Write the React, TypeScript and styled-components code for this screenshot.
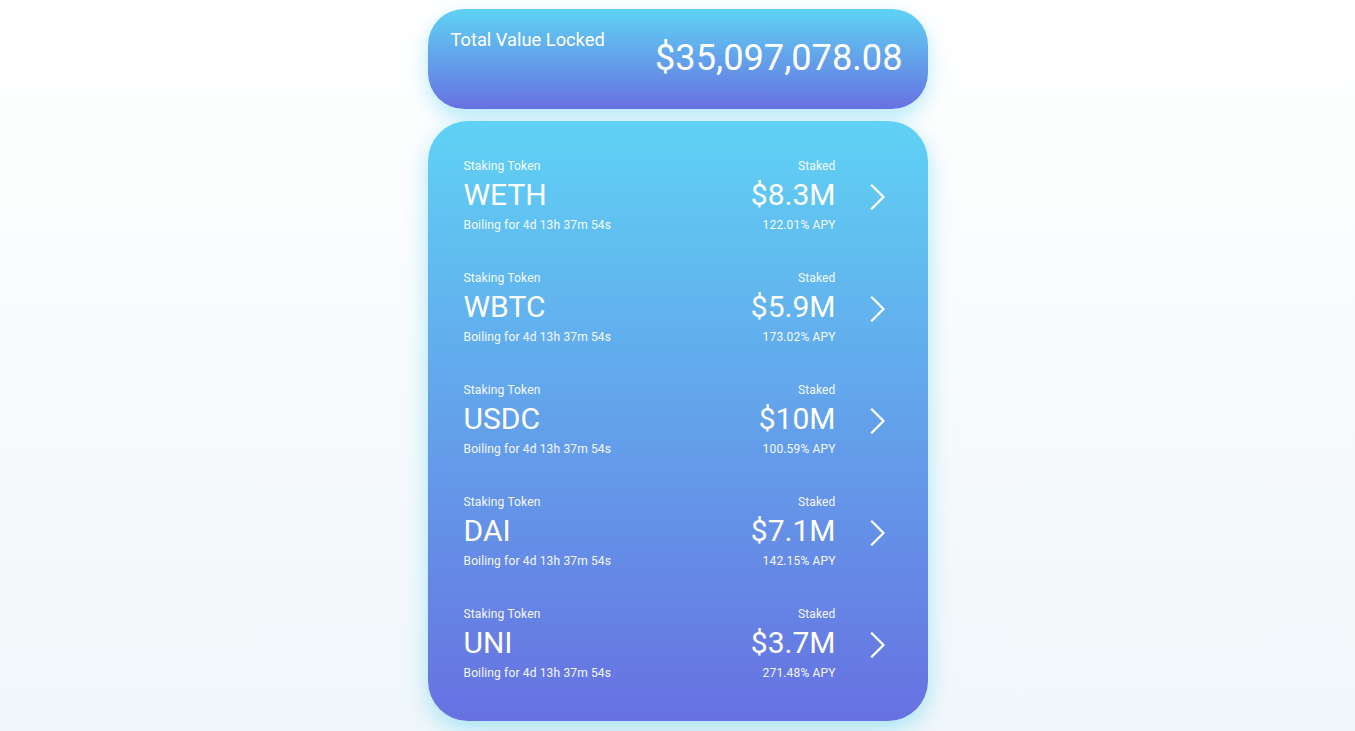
import styled, { createGlobalStyle } from "styled-components";

type Pool = {
  token: string
  staked: string
  apy: string
}

const pools: Pool[] = [
  { token: "WETH", staked: "$8.3M", apy: "122.01% APY" },
  { token: "WBTC", staked: "$5.9M", apy: "173.02% APY" },
  { token: "USDC", staked: "$10M", apy: "100.59% APY" },
  { token: "DAI", staked: "$7.1M", apy: "142.15% APY" },
  { token: "UNI", staked: "$3.7M", apy: "271.48% APY" },
];

const GlobalStyle = createGlobalStyle`
  html, body {
    margin: 0;
    padding: 0;
  }
  body {
    font-family: Roboto, "Liberation Sans", sans-serif;
    background: linear-gradient(180deg, #ffffff 0%, #f0f7fa 100%);
    min-height: 731px;
    color: #fff;
  }
`

function Chevron() {
  return (
    <svg width="16" height="26" viewBox="0 0 16 26" fill="none">
      <path d="M2 1.5 L13.5 13 L2 24.5" stroke="#fff" strokeWidth="2.2" strokeLinecap="square" />
    </svg>
  )
}

export default function App() {
  return (
    <>
      <GlobalStyle />
      <Page>
        <TvlCard>
          <TvlLabel>Total Value Locked</TvlLabel>
          <TvlAmount>$35,097,078.08</TvlAmount>
        </TvlCard>

        <PoolCard>
          {pools.map((pool) => (
            <PoolRow key={pool.token}>
              <PoolInfo>
                <SmallText>Staking Token</SmallText>
                <BigText>{pool.token}</BigText>
                <SmallText>Boiling for 4d 13h 37m 54s</SmallText>
              </PoolInfo>
              <PoolInfo $right>
                <SmallText>Staked</SmallText>
                <BigText>{pool.staked}</BigText>
                <SmallText>{pool.apy}</SmallText>
              </PoolInfo>
              <Arrow>
                <Chevron />
              </Arrow>
            </PoolRow>
          ))}
        </PoolCard>
      </Page>
    </>
  )
}

const Page = styled.div`
  display: flex;
  flex-direction: column;
  align-items: center;
  padding-top: 9px;
  gap: 12px;
`

const TvlCard = styled.div`
  width: 500px;
  height: 100px;
  box-sizing: border-box;
  border-radius: 36px;
  background: linear-gradient(180deg, #5fd2f4 0%, #6771e1 100%);
  box-shadow: 0 8px 20px rgba(95, 210, 244, 0.45);
  padding: 19px 25px 0 23px;
  display: flex;
  justify-content: space-between;
  align-items: flex-start;
`

const TvlLabel = styled.div`
  font-size: 18.3px;
  line-height: 24px;
`

const TvlAmount = styled.div`
  font-size: 36.2px;
  line-height: 42px;
  margin-top: 9px;
  font-weight: 400;
`

const PoolCard = styled.div`
  width: 500px;
  height: 600px;
  box-sizing: border-box;
  border-radius: 40px;
  background: linear-gradient(180deg, #5fd2f4 0%, #6771e1 100%);
  box-shadow: 0 8px 22px rgba(95, 210, 244, 0.5);
  padding: 38px 42px 0 36px;
  display: flex;
  flex-direction: column;
  gap: 39px;
`

const PoolRow = styled.div`
  display: flex;
  align-items: center;
`

const PoolInfo = styled.div<{ $right?: boolean }>`
  display: flex;
  flex-direction: column;
  align-items: ${(p) => (p.$right ? "flex-end" : "flex-start")};
  flex: ${(p) => (p.$right ? "0 0 auto" : "1")};
`

const SmallText = styled.div`
  font-size: 12px;
  line-height: 14px;
  letter-spacing: 0.15px;
  opacity: 0.95;
`

const BigText = styled.div`
  font-size: 30px;
  line-height: 34px;
  margin: 5px 0 6px;
`

const Arrow = styled.div`
  width: 50px;
  display: flex;
  justify-content: flex-end;
  padding-top: 2px;
`
